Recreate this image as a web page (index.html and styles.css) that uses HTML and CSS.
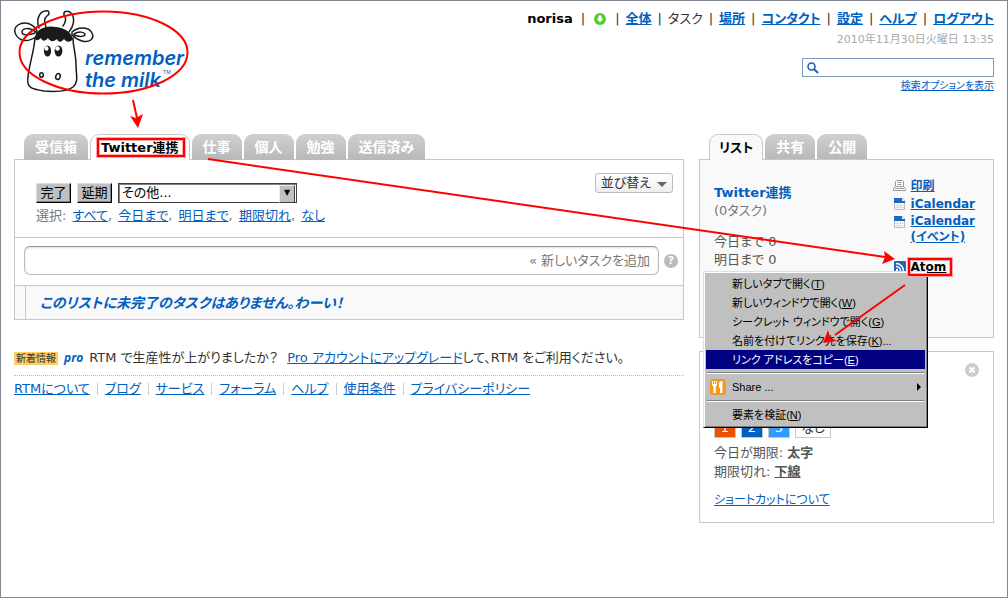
FILE: index.html
```
<!DOCTYPE html>
<html lang="ja">
<head>
    <meta charset="UTF-8">
    <meta name="viewport" content="width=device-width, initial-scale=1.0">
    <title>Remember The Milk - タスク</title>
    <link rel="stylesheet" href="styles.css">
</head>
<body>
    <div class="page">
        <header class="header">
            <a href="#" class="logo" aria-label="remember the milk">
                <svg width="180" height="90" viewBox="12 8 180 90">
                    <g fill="#fff" stroke="#1a1a1a" stroke-width="1.500" stroke-linejoin="round" stroke-linecap="round">
                        <path d="M39 28 C36 20 39 12 45 11 C50 10 50 14 47 16 C43 19 45 23 46 27"/>
                        <path d="M63 26 C66 22 67 19 64 15 C63 11 68 10 71 13 C76 19 73 27 69 32"/>
                        <path d="M37 31 C33 23 24 21 18 25 C12 29 15 37 22 40 C28 42 33 39 37 36 Z"/>
                        <path d="M36 32 C30 27 22 28 22 32 C22 36 30 35 35 33"/>
                        <path d="M72 32 C79 26 89 27 92 33 C95 39 89 43 82 41 C78 40 75 38 72 35 Z"/>
                        <path d="M74 34 C79 31 84 32 85 34 C85 37 79 37 74 35"/>
                        <path d="M35 38 C34 52 29 65 28 77 C26 88 32 89 44 91 C56 92 68 91 73 87 C79 82 76 75 76 65 C76 54 73 47 73 38"/>
                    </g>
                    <path fill="#1a1a1a" d="M35 37 C37 28 47 25 56 27 C65 28 71 32 73 39 C70 43 66 42 64 39 C61 43 58 42 57 39 C54 42 50 42 48 38 C45 42 42 41 41 38 C38 41 35 41 35 37 Z"/>
                    <g fill="#1a1a1a">
                        <ellipse cx="47.500" cy="51" rx="3.600" ry="5.500"/>
                        <ellipse cx="58.500" cy="51" rx="3.900" ry="5.500"/>
                    </g>
                    <g fill="#fff">
                        <ellipse cx="46.500" cy="48.500" rx="2" ry="2.200"/>
                        <ellipse cx="57.500" cy="48.500" rx="2.200" ry="2.300"/>
                    </g>
                    <g fill="none" stroke="#1a1a1a" stroke-width="1.500">
                        <ellipse cx="41.500" cy="75" rx="1.800" ry="2.200"/>
                        <ellipse cx="58" cy="76.500" rx="2.200" ry="3" transform="rotate(20 58 76.500)"/>
                    </g>
                    <g class="logo-text">
                        <text x="85" y="65">remember</text>
                        <text x="85" y="87">the milk</text>
                        <text class="logo-tm" x="163" y="74">TM</text>
                    </g>
                </svg>
            </a>
            <div class="header-right">
                <nav class="nav">
                    <b class="user">norisa</b>
                    <i>|</i>
                    <svg class="status" width="12" height="12" viewBox="0 0 12 12">
                        <circle cx="6" cy="6" r="6" fill="#5c3"/>
                        <path d="M4.500 2.500h3v3h2L6 9.500 2.500 5.500h2z" fill="#fff"/>
                    </svg>
                    <i>|</i>
                    <a href="#">全体</a>
                    <i>|</i>
                    <span>タスク</span>
                    <i>|</i>
                    <a href="#">場所</a>
                    <i>|</i>
                    <a href="#">コンタクト</a>
                    <i>|</i>
                    <a href="#">設定</a>
                    <i>|</i>
                    <a href="#">ヘルプ</a>
                    <i>|</i>
                    <a href="#">ログアウト</a>
                </nav>
                <div class="date">2010年11月30日火曜日 13:35</div>
                <div class="search">
                    <svg width="12" height="12" viewBox="0 0 12 12" fill="none" stroke="#1c5fb4">
                        <circle cx="4.500" cy="4.500" r="3.500" stroke-width="1.600"/>
                        <path d="M7 7l4 4" stroke-width="2"/>
                    </svg>
                    <input type="text" aria-label="検索">
                </div>
                <a href="#" class="search-options">検索オプションを表示</a>
            </div>
        </header>

        <div class="columns">
            <main>
                <div class="tabs">
                    <button class="tab">受信箱</button>
                    <button class="tab active">Twitter連携</button>
                    <button class="tab">仕事</button>
                    <button class="tab">個人</button>
                    <button class="tab">勉強</button>
                    <button class="tab">送信済み</button>
                </div>
                <section class="tasks">
                    <div class="toolbar">
                        <div>
                            <div class="actions">
                                <button class="classic">完了</button>
                                <button class="classic">延期</button>
                                <div class="select">
                                    <select aria-label="その他の操作">
                                        <option>その他...</option>
                                    </select>
                                </div>
                            </div>
                            <div class="choose">選択: <a href="#">すべて</a>, <a href="#">今日まで</a>, <a href="#">明日まで</a>, <a href="#">期限切れ</a>, <a href="#">なし</a></div>
                        </div>
                        <button class="sort">並び替え</button>
                    </div>
                    <div class="add-task">
                        <input type="text" placeholder="« 新しいタスクを追加" aria-label="新しいタスクを追加">
                        <button class="help" aria-label="ヘルプ">?</button>
                    </div>
                    <div class="empty">
                        <p>このリストに未完了のタスクはありません。わーい！</p>
                    </div>
                </section>

                <footer>
                    <div class="news">
                        <span class="badge">新着情報</span>
                        <span class="pro">pro</span>
                        <span>RTM で生産性が上がりましたか？</span>
                        <span><a href="#">Pro アカウントにアップグレード</a>して、RTM をご利用ください。</span>
                    </div>
                    <ul class="footer-links">
                        <li><a href="#">RTMについて</a></li>
                        <li><a href="#">ブログ</a></li>
                        <li><a href="#">サービス</a></li>
                        <li><a href="#">フォーラム</a></li>
                        <li><a href="#">ヘルプ</a></li>
                        <li><a href="#">使用条件</a></li>
                        <li><a href="#">プライバシーポリシー</a></li>
                    </ul>
                </footer>
            </main>

            <aside>
                <div class="tabs">
                    <button class="tab active">リスト</button>
                    <button class="tab">共有</button>
                    <button class="tab">公開</button>
                </div>
                <section class="list-info">
                    <div class="summary">
                        <h2>Twitter連携</h2>
                        <p class="count">(0タスク)</p>
                        <p>今日まで 0</p>
                        <p>明日まで 0</p>
                    </div>
                    <ul class="feeds">
                        <li>
                            <svg width="13" height="12" viewBox="0 0 13 12" fill="#fff" stroke="#999">
                                <path d="M2.500 6.500v-5l1-1h6l1 1v5M4.500 2.500h4M4.500 4.500h4"/>
                                <path d="M2.500 6.500h8l2 2v2h-12v-2zM2 8.500h9"/>
                            </svg>
                            <a href="#">印刷</a>
                        </li>
                        <li>
                            <svg width="13" height="12" viewBox="0 0 13 12">
                                <path d="M1.500 .5h8l2 2v9h-10z" fill="#fff" stroke="#bbb"/>
                                <path d="M4.500 5v6M7.500 5v6M2 7.500h9M2 9.500h9" stroke="#ddd"/>
                                <path d="M1 0h8v3h3v2H1z" fill="#1c68c4"/>
                            </svg>
                            <a href="#">iCalendar</a>
                        </li>
                        <li>
                            <svg width="13" height="12" viewBox="0 0 13 12">
                                <path d="M1.500 .5h8l2 2v9h-10z" fill="#fff" stroke="#bbb"/>
                                <path d="M4.500 5v6M7.500 5v6M2 7.500h9M2 9.500h9" stroke="#ddd"/>
                                <path d="M1 0h8v3h3v2H1z" fill="#1c68c4"/>
                            </svg>
                            <a href="#">iCalendar<br>(イベント)</a>
                        </li>
                        <li class="atom">
                            <svg width="13" height="12" viewBox="0 0 13 12">
                                <rect x="1" width="12" height="12" rx="1" fill="#2767b5"/>
                                <g fill="none" stroke="#fff" stroke-width="1.500">
                                    <path d="M3 2.500a7.500 7.500 0 0 1 7.500 7.500M3 5.500a4.500 4.500 0 0 1 4.500 4.500"/>
                                </g>
                                <circle cx="4" cy="9" r="1.200" fill="#fff"/>
                            </svg>
                            <a href="#">Atom</a>
                        </li>
                    </ul>

                    <div class="context-menu" role="menu">
                        <button role="menuitem">新しいタブで開く(<u>T</u>)</button>
                        <button role="menuitem">新しいウィンドウで開く(<u>W</u>)</button>
                        <button role="menuitem">シークレット ウィンドウで開く(<u>G</u>)</button>
                        <button role="menuitem">名前を付けてリンク先を保存(<u>K</u>)...</button>
                        <button role="menuitem" class="selected">リンク アドレスをコピー(<u>E</u>)</button>
                        <hr>
                        <button role="menuitem" class="share">
                            <svg width="16" height="16" viewBox="0 0 16 16">
                                <rect width="16" height="16" rx="3" fill="#f39a1e"/>
                                <path d="M2 2h1v3h1V2h1v3h1V2h1v4L5.800 7.500V14H3.500V7.500L2 6zM10 14V9H9V5c0-2 1-3 3.500-3v12z" fill="#fff"/>
                            </svg>
                            Share ...
                        </button>
                        <hr>
                        <button role="menuitem">要素を検証(<u>N</u>)</button>
                    </div>
                </section>

                <section class="legend">
                    <button class="close" aria-label="閉じる">
                        <svg width="14" height="14" viewBox="0 0 14 14">
                            <circle cx="7" cy="7" r="7" fill="#ccc"/>
                            <path d="M4.500 4.500l5 5M9.500 4.500l-5 5" stroke="#fff" stroke-width="2.200"/>
                        </svg>
                    </button>
                    <div class="priorities">
                        <span class="p1">1</span>
                        <span class="p2">2</span>
                        <span class="p3">3</span>
                        <span class="none">なし</span>
                    </div>
                    <p>今日が期限: <b>太字</b></p>
                    <p>期限切れ: <b><u>下線</u></b></p>
                    <a href="#">ショートカットについて</a>
                </section>
            </aside>
        </div>

        <!-- step markers -->
        <svg class="markers" width="1008" height="598" viewBox="0 0 1008 598">
            <g fill="none" stroke="#f00" stroke-width="2">
                <ellipse cx="103.500" cy="52.500" rx="84" ry="41"/>
                <path d="M133 100l4 18M208 159l677 98M905 285l-70 50"/>
            </g>
            <g fill="none" stroke="#faa" stroke-width="4">
                <rect x="98" y="139" width="86" height="17"/>
                <rect x="909" y="259" width="42" height="16"/>
            </g>
            <g fill="none" stroke="#f00" stroke-width="2">
                <rect x="98" y="139" width="86" height="17"/>
                <rect x="909" y="259" width="42" height="16"/>
            </g>
            <g fill="#f00">
                <path d="M138 128l-8-12 6 2 7-4z"/>
                <path d="M895 259l-13 5 3-7-1-6z"/>
                <path d="M823 343l5-13 2 7 7 4z"/>
            </g>
        </svg>
    </div>
</body>
</html>
```
FILE: styles.css
```
* {
    box-sizing: border-box;
}

body {
    margin: 0;
    font-family: "DejaVu Sans", "Noto Sans CJK JP", sans-serif;
    font-size: 13px;
    line-height: 18px;
    color: #333;
    background: #fff;
    font-feature-settings: "palt";
}

button,
input,
select {
    font: inherit;
    font-feature-settings: inherit;
    color: inherit;
    margin: 0;
    padding: 0;
}

a {
    color: #0060bf;
    text-decoration: underline;
}

p,
ul {
    margin: 0;
    padding: 0;
}

li {
    list-style: none;
}

.page {
    position: relative;
    min-height: 100vh;
    padding: 9px 13px;
    border: 1px solid #808792;
}

/* header */
.header {
    display: flex;
    justify-content: space-between;
    min-height: 124px;
}

.logo {
    height: 90px;
    margin-top: -2px;
    margin-left: -2px;
}

.logo svg {
    display: block;
}

.logo-text {
    font-family: Inter, sans-serif;
    font-size: 20px;
    font-weight: 600;
    font-style: italic;
    fill: #0060bf;
}

.logo-tm {
    font-size: 5px;
    font-style: normal;
    font-weight: 400;
}

.header-right {
    display: flex;
    flex-direction: column;
    align-items: flex-end;
}

.nav {
    display: flex;
    align-items: center;
    gap: 6px;
}

.nav a {
    font-weight: bold;
}

.nav i {
    font-style: normal;
}

.user {
    margin-right: 2px;
    color: #000;
}

.status {
    margin: 0 3px;
}

.date {
    margin-top: 4px;
    font-size: 11px;
    line-height: 16px;
    color: #aaa;
}

.search {
    display: flex;
    align-items: center;
    width: 192px;
    height: 19px;
    margin-top: 10px;
    padding-left: 4px;
    border: 1px solid #7f9db9;
}

.search input {
    flex: 1;
    min-width: 0;
    border: 0;
    outline: 0;
    background: none;
}

.search-options {
    font-size: 10px;
}

/* layout */
.columns {
    display: grid;
    grid-template-columns: 1fr 295px;
    gap: 15px;
}

.tabs {
    display: flex;
    gap: 2px;
    padding-left: 10px;
}

.tab {
    height: 26px;
    padding: 0 11px;
    border: 0;
    border-radius: 9px 9px 0 0;
    background: linear-gradient(#d0d0d0, #b8b8b8);
    color: #fff;
    font-size: 14px;
    font-weight: bold;
}

.tab.active {
    position: relative;
    z-index: 1;
    padding: 0 10px;
    border: 1px solid #c8c8c8;
    border-bottom: 0;
    background: #fff;
    color: #000;
    font-size: 13px;
}

aside .tab.active {
    padding: 0 9px;
    background: #f9f9f9;
}

/* task list */
.tasks {
    margin-top: -1px;
    border: 1px solid #c8c8c8;
}

.toolbar {
    display: flex;
    justify-content: space-between;
    align-items: flex-start;
    height: 78px;
    padding: 13px 10px 0 21px;
    border-bottom: 1px solid #c8c8c8;
}

.actions {
    display: flex;
    gap: 6px;
    margin-top: 10px;
}

.classic {
    width: 35px;
    height: 20px;
    border: 1px solid;
    border-color: #ddd #000 #000 #ddd;
    background: #c0c0c0;
    box-shadow: inset -1px -1px #808080;
    color: #000;
    line-height: 16px;
}

.select {
    position: relative;
    width: 179px;
}

.select select {
    display: block;
    width: 100%;
    height: 20px;
    padding-left: 3px;
    appearance: none;
    border: 1px solid #404040;
    border-radius: 0;
    box-shadow: inset 1px 1px #808080;
    background: #fff;
    color: #000;
    line-height: 16px;
}

.select::after {
    content: "▼";
    position: absolute;
    top: 2px;
    right: 2px;
    width: 14px;
    height: 16px;
    border: 1px solid;
    border-color: #eee #404040 #404040 #eee;
    background: #c0c0c0;
    color: #000;
    font-size: 8px;
    line-height: 14px;
    text-align: center;
    pointer-events: none;
}

.choose {
    margin-top: 4px;
    color: #777;
}

.choose a {
    margin-left: 2px;
}

.sort {
    display: flex;
    align-items: center;
    gap: 6px;
    height: 20px;
    padding: 0 5px;
    border: 1px solid #bbb;
    border-radius: 3px;
    background: linear-gradient(#fff, #eee);
}

.sort::after {
    content: "";
    border: 5px solid transparent;
    border-top-color: #666;
    border-bottom: 0;
    margin-top: 3px;
}

.add-task {
    display: flex;
    align-items: center;
    gap: 5px;
    padding: 8px 5px 10px 9px;
    border-bottom: 1px solid #c8c8c8;
}

.add-task input {
    flex: 1;
    height: 29px;
    padding: 0 8px;
    border: 1px solid #bbb;
    border-top-color: #999;
    border-radius: 6px;
    box-shadow: inset 0 1px 2px #ddd;
    text-align: right;
}

.add-task input::placeholder {
    color: #777;
}

.help {
    width: 14px;
    height: 14px;
    border: 0;
    border-radius: 7px;
    background: #bbb;
    color: #fff;
    font-size: 11px;
    font-weight: bold;
    line-height: 14px;
}

.empty {
    padding-left: 10px;
    background: #f9f9f9;
}

.empty p {
    padding: 8px 14px 7px;
    border-left: 1px solid #c8c8c8;
    color: #0060bf;
    font-size: 14px;
    font-weight: bold;
    font-style: italic;
}

/* footer */
.news {
    display: flex;
    align-items: center;
    gap: 6px;
    margin-top: 29px;
    padding-bottom: 8px;
    border-bottom: 1px dotted #bbb;
}

.badge {
    padding: 0 2px;
    background: #fc6;
    font-size: 10px;
    line-height: 13px;
}

.pro {
    color: #0060bf;
    font-family: "Open Sans", sans-serif;
    font-size: 12px;
    font-weight: bold;
    font-style: italic;
}

.news span:last-child {
    margin-left: 3px;
}

.footer-links {
    display: flex;
    margin-top: 4px;
}

.footer-links li {
    display: flex;
    align-items: center;
}

.footer-links li + li::before {
    content: "";
    height: 12px;
    margin: 0 7px;
    border-left: 1px solid #ccc;
}

/* sidebar */
.list-info {
    position: relative;
    display: flex;
    justify-content: space-between;
    min-height: 179px;
    margin-top: -1px;
    padding: 17px 18px 0 14px;
    border: 1px solid #c8c8c8;
    background: #f9f9f9;
}

.summary {
    padding-top: 7px;
    color: #555;
}

.summary h2 {
    margin: 0;
    color: #0060bf;
    font-size: 13px;
}

.summary .count {
    margin-bottom: 13px;
    color: #777;
}

.feeds {
    font-size: 12px;
    font-weight: bold;
}

.feeds li {
    display: flex;
    gap: 5px;
}

.feeds svg {
    margin-top: 3px;
}

.feeds li:nth-child(3) a {
    line-height: 16px;
}

.feeds .atom {
    margin-top: 13px;
}

.atom a {
    color: #000;
}

.context-menu {
    position: absolute;
    z-index: 2;
    top: 111px;
    left: 3px;
    width: 225px;
    padding: 2px 2px 3px;
    border: 1px solid;
    border-color: #dfdfdf #000 #000 #dfdfdf;
    background: #c0c0c0;
    box-shadow: inset 1px 1px #fff, inset -1px -1px #808080;
    font-family: "Liberation Sans", "Noto Sans CJK JP", sans-serif;
    font-size: 11px;
    color: #000;
}

.context-menu button {
    display: block;
    width: 100%;
    height: 19px;
    padding-left: 26px;
    border: 0;
    background: none;
    text-align: left;
}

.context-menu .selected {
    background: #000080;
    color: #fff;
}

.context-menu hr {
    height: 2px;
    margin: 3px 1px;
    border: 0;
    border-top: 1px solid #808080;
    border-bottom: 1px solid #fff;
}

.context-menu .share {
    display: flex;
    align-items: center;
    gap: 6px;
    height: 20px;
    padding: 0 4px;
}

.share::after {
    content: "";
    margin-left: auto;
    border: 4px solid transparent;
    border-left-color: #000;
    border-right: 0;
}

.legend {
    display: flow-root;
    margin-top: 13px;
    padding: 11px 14px 12px;
    border: 1px solid #c8c8c8;
    color: #555;
    line-height: 19px;
}

.close {
    display: block;
    width: 14px;
    height: 14px;
    margin-left: auto;
    border: 0;
    background: none;
}

.close svg {
    display: block;
}

.priorities {
    display: flex;
    gap: 5px;
    margin: 41px 0 5px;
    line-height: 18px;
    text-align: center;
}

.priorities span {
    width: 22px;
    border: 1px solid #c8c8c8;
    color: #fff;
}

.priorities .p1 {
    background: #ea5200;
}

.priorities .p2 {
    background: #0060bf;
}

.priorities .p3 {
    background: #359aff;
}

.priorities .none {
    width: 36px;
    color: #333;
}

.legend > a {
    display: inline-block;
    margin-top: 10px;
    font-size: 12px;
}

.markers {
    position: absolute;
    z-index: 3;
    top: -1px;
    left: -1px;
    pointer-events: none;
}
```
